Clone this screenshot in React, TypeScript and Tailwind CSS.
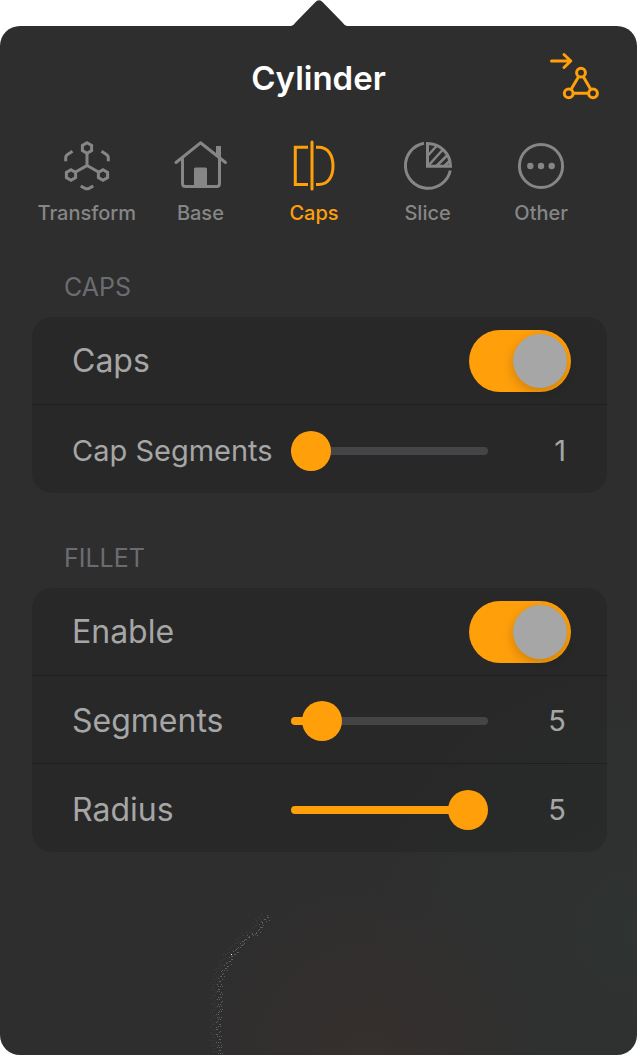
import React, { useId, useState } from 'react';

const iconProps = {
  width: 56,
  height: 56,
  viewBox: '0 0 56 56',
  fill: 'none',
  stroke: 'currentColor',
  strokeWidth: 3,
  'aria-hidden': true,
};

function TransformIcon() {
  return (
    <svg {...iconProps}>
      <path d="M28 4.8l4.6 2.6v5.2L28 15.2l-4.6-2.6V7.4z" />
      <path d="M12 31.8l4.6 2.6v5.2L12 42.2l-4.6-2.6v-5.2z" />
      <path d="M44 31.8l4.6 2.6v5.2L44 42.2l-4.6-2.6v-5.2z" />
      <path d="M28 15v12.500L16.500 34M28 27.500L39.500 34" />
      <path d="M6.700 23.300v-3.500q0-2 1.500-3l5.300-3.500M49.300 23.300v-3.500q0-2-1.500-3l-5.300-3.500M21.700 48l4.300 2.400q2 .9 4 0l4.300-2.400" />
    </svg>
  );
}

function BaseIcon() {
  return (
    <svg {...iconProps} strokeLinecap="round" strokeLinejoin="round">
      <path d="M4 24.500L28.500 4.800L53.500 24.500" />
      <path d="M10.500 21v24.500q0 3 3 3h31q3 0 3-3V21" />
      <path d="M44 16V8h5v12z" fill="currentColor" stroke="none" />
      <path d="M22 48V31q0-1.500 1.500-1.500h10q1.500 0 1.500 1.500v17z" fill="currentColor" stroke="none" />
    </svg>
  );
}

function CapsIcon() {
  return (
    <svg {...iconProps}>
      <path d="M22 9.300H9.300v37.200H22M30 9.300h2.500C42 9.300 47 17 47 28S42 46.500 32.500 46.500H30" />
      <path d="M26 4v47" strokeLinecap="round" />
    </svg>
  );
}

function SliceIcon() {
  return (
    <svg {...iconProps}>
      <path d="M24 5.300A22.700 22.700 0 1 0 50.300 32.500" />
      <path d="M27.500 5.500V28.300H50.500A23 23 0 0 0 27.500 5.500z" />
      <path d="M28 17.500L36.500 8M28 28L42.500 12M36 28.500L47.500 17M44 28.500L50 22.500" strokeWidth={2.5} />
    </svg>
  );
}

function OtherIcon() {
  return (
    <svg {...iconProps}>
      <circle cx="28" cy="28" r="21.600" />
      <g fill="currentColor" stroke="none">
        <circle cx="17.300" cy="28" r="3.200" />
        <circle cx="28" cy="28" r="3.200" />
        <circle cx="38.700" cy="28" r="3.200" />
      </g>
    </svg>
  );
}

function ConvertIcon() {
  return (
    <svg width="52" height="52" viewBox="0 1 52 52" fill="none" stroke="currentColor" strokeWidth="3" aria-hidden="true">
      <path d="M3.500 11h19M16 4.500l6.800 6.500L16 17.500" strokeLinecap="round" strokeLinejoin="round" />
      <circle cx="33" cy="22.700" r="4.400" />
      <circle cx="20.700" cy="43.300" r="4.400" />
      <circle cx="45" cy="43.300" r="4.400" />
      <path d="M30.700 26.500l-7.700 13M35.200 26.500l7.600 13M25 43.300h15.500" />
    </svg>
  );
}

const tabs = [
  { name: 'Transform', Icon: TransformIcon },
  { name: 'Base', Icon: BaseIcon },
  { name: 'Caps', Icon: CapsIcon },
  { name: 'Slice', Icon: SliceIcon },
  { name: 'Other', Icon: OtherIcon },
];

function Section({ title, children }: { title: string; children: React.ReactNode }) {
  return (
    <section>
      <h2 className="pl-8 text-[25px] leading-[60px] text-[#6c6c70]">{title}</h2>
      <div className="divide-y divide-[#1f1f1f] rounded-[20px] bg-black/12">{children}</div>
    </section>
  );
}

function ToggleRow({ label }: { label: string }) {
  const id = useId();
  const [on, setOn] = useState(true);

  return (
    <div className="flex h-[88px] items-center pl-10 pr-9">
      <label htmlFor={id} className="flex-1 text-[32px] leading-10">
        {label}
      </label>
      <input
        id={id}
        type="checkbox"
        checked={on}
        onChange={(e) => setOn(e.target.checked)}
        className="flex h-[62px] w-[102px] shrink-0 appearance-none items-center rounded-full bg-[#454548] px-1 before:size-[54px] before:rounded-full before:bg-[#a6a6a6] before:shadow-[0_4px_12px_rgba(0,0,0,0.2)] before:content-[''] checked:justify-end checked:bg-[#ff9f0a]"
      />
    </div>
  );
}

type SliderRowProps = { label: string; initial: number; max: number; small?: boolean };

function SliderRow({ label, initial, max, small }: SliderRowProps) {
  const id = useId();
  const [value, setValue] = useState(initial);
  const fill = `${((value - 1) / (max - 1)) * 80 + 10}%`;

  return (
    <div className="flex h-[88px] items-center pl-10 pr-9 pt-[3px]">
      <label htmlFor={id} className={small ? 'flex-1 whitespace-nowrap text-[29px] leading-10' : 'flex-1 text-[32px] leading-10'}>
        {label}
      </label>
      <input
        id={id}
        type="range"
        min={1}
        max={max}
        value={value}
        onChange={(e) => setValue(Number(e.target.value))}
        style={{ '--fill': fill } as React.CSSProperties}
        className="h-10 w-[197px] shrink-0 appearance-none bg-transparent [&::-webkit-slider-runnable-track]:h-2 [&::-webkit-slider-runnable-track]:rounded-full [&::-webkit-slider-runnable-track]:bg-[linear-gradient(to_right,#ff9f0a_var(--fill),#454548_var(--fill))] [&::-webkit-slider-thumb]:-mt-4 [&::-webkit-slider-thumb]:size-10 [&::-webkit-slider-thumb]:appearance-none [&::-webkit-slider-thumb]:rounded-full [&::-webkit-slider-thumb]:bg-[#ff9f0a]"
      />
      <output htmlFor={id} className="w-[83px] pr-[5px] text-right text-[29px] leading-10">
        {value}
      </output>
    </div>
  );
}

// Grainy edge of the model showing through the panel
const edge = [
  [69, 4], [62, 11], [58, 21], [48, 24], [38, 36], [31, 46], [29, 50],
  [23, 60], [19, 70], [20, 90], [18, 110], [18, 120], [20, 143],
];

const grains = edge.slice(1).flatMap(([x2, y2], i) => {
  const [x1, y1] = edge[i];
  const count = Math.ceil(Math.hypot(x2 - x1, y2 - y1) * 0.9);
  return Array.from({ length: count }, (_, n) => {
    const t = n / count;
    const jitter = ((n * 37 + i * 17) % 7) - 3;
    return {
      x: Math.round(x1 + (x2 - x1) * t + jitter * 0.8),
      y: Math.round(y1 + (y2 - y1) * t + (((n * 13) % 5) - 2) * 0.6),
    };
  });
});

function GrainyEdge() {
  return (
    <svg width="80" height="143" viewBox="0 0 80 143" shapeRendering="crispEdges" aria-hidden="true">
      {grains.map(({ x, y }, i) => (
        <g key={i}>
          <rect x={x - 6} y={y - 2} width="1" height="1" fill="#3a3a3a" />
          <rect x={x} y={y} width="1" height="1" fill="#5e5e5e" />
        </g>
      ))}
      <rect x="31" y="42" width="1" height="1" fill="#ffffff" />
    </svg>
  );
}

export default function App() {
  const [active, setActive] = useState('Caps');

  return (
    <div className="flex min-h-screen flex-col bg-white font-['Inter',sans-serif] text-[#a6a6a6]">
      <svg width="56" height="26" viewBox="0 0 56 26" className="mx-auto block" aria-hidden="true">
        <path d="M0 26Q3 25 5 22L24 2.500Q28-2 32 2.500L51 22Q53 25 56 26z" fill="#2e2e2e" />
      </svg>

      <main className="flex flex-1 flex-col rounded-[20px] bg-[#2e2e2e] bg-[radial-gradient(circle_at_58%_100%,#36302e_0,transparent_180px),radial-gradient(circle_at_100%_88%,#2f3332_0,transparent_260px)]">
        <header className="grid h-[102px] grid-cols-[1fr_auto_1fr] items-center px-[37px]">
          <h1 className="col-start-2 pt-0.5 text-[33px] font-semibold leading-10 text-white">Cylinder</h1>
          <button type="button" aria-label="Convert to mesh" className="justify-self-end text-[#ff9f0a]">
            <ConvertIcon />
          </button>
        </header>

        <nav className="grid grid-cols-5 pl-[30px] pr-[39px] pt-[10px]">
          {tabs.map(({ name, Icon }) => (
            <button
              key={name}
              type="button"
              onClick={() => setActive(name)}
              className={
                name === active
                  ? 'flex flex-col items-center gap-1 text-[#ff9f0a]'
                  : 'flex flex-col items-center gap-1 text-[#868686]'
              }
            >
              <Icon />
              <span className="text-[20px] font-medium leading-[30px]">{name}</span>
            </button>
          ))}
        </nav>

        <div className="flex flex-col gap-[35px] pl-8 pr-[30px] pt-[29px]">
          <Section title="CAPS">
            <ToggleRow label="Caps" />
            <SliderRow label="Cap Segments" initial={1} max={60} small />
          </Section>
          <Section title="FILLET">
            <ToggleRow label="Enable" />
            <SliderRow label="Segments" initial={5} max={60} />
            <SliderRow label="Radius" initial={5} max={5} />
          </Section>
        </div>

        <div className="flex flex-1 items-end pl-[200px]">
          <GrainyEdge />
        </div>
      </main>
    </div>
  );
}
